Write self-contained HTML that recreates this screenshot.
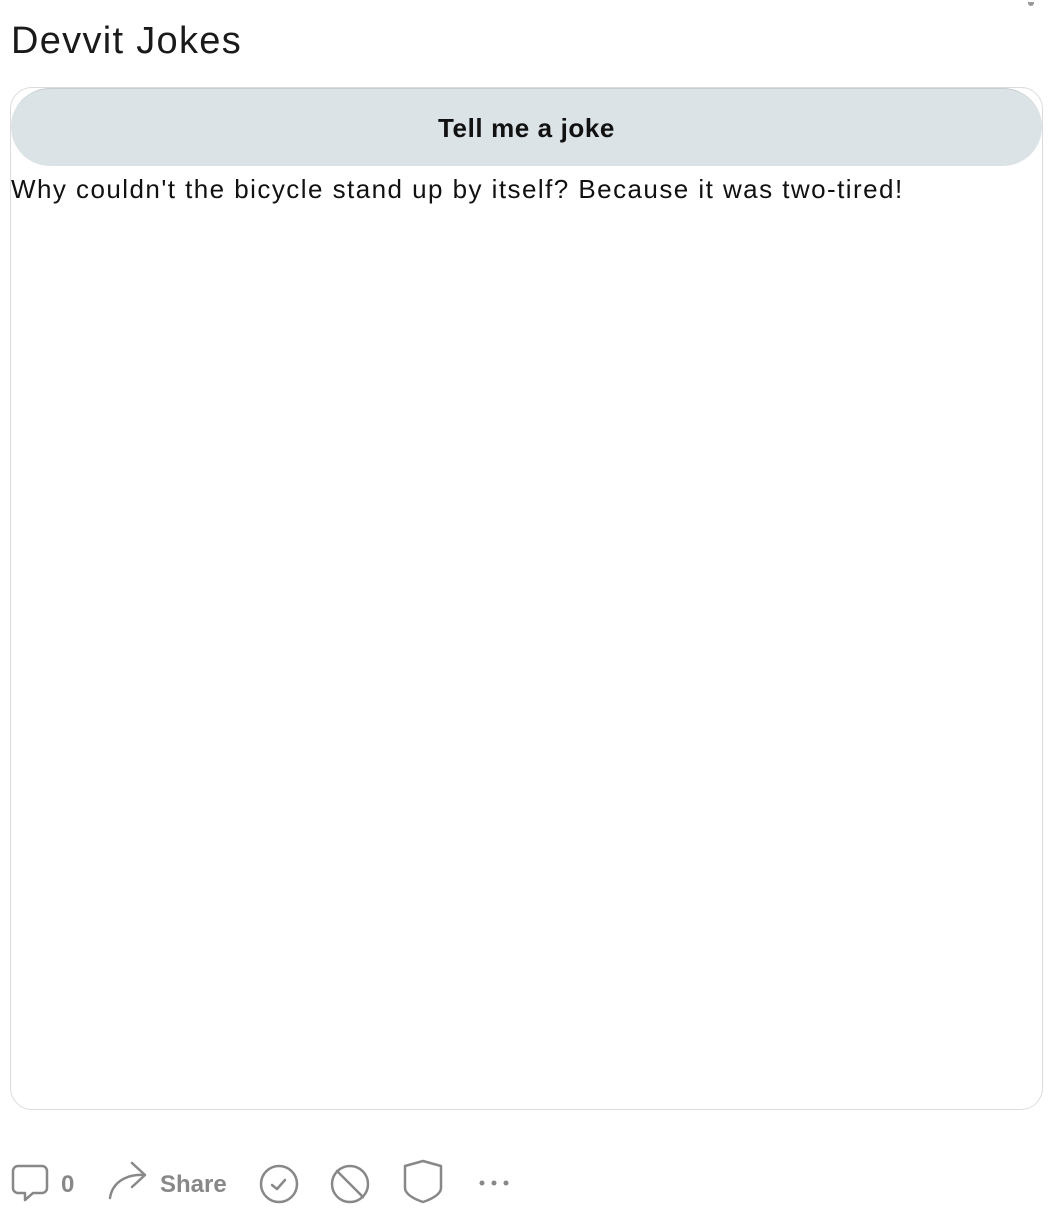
<!DOCTYPE html>
<html><head><style>
body{margin:0;width:1060px;height:1222px;background:#fff;font-family:"Liberation Sans",sans-serif;position:relative;overflow:hidden}
h1{position:absolute;left:11px;top:19px;margin:0;font-size:38px;font-weight:400;color:#1a1a1b;line-height:44px;letter-spacing:1.3px}
.card{position:absolute;left:10px;top:87px;width:1031px;height:1021px;border:1px solid #dcdcdc;border-radius:22px;overflow:hidden}
.btn{position:absolute;left:0;top:0;width:1031px;height:78px;background:#dce3e7;border-radius:40px;border-top:1px solid #c8cdd0;box-sizing:border-box;text-align:center;line-height:78px;font-size:26px;font-weight:700;color:#111;letter-spacing:0.6px}
.joke{position:absolute;left:0;top:86px;font-size:26px;color:#111;white-space:nowrap;letter-spacing:1.45px}
.bar{position:absolute;left:0;top:1160px}
.t{position:absolute;font-size:24px;font-weight:700;color:#888;top:1171px}
</style></head><body>
<div style="position:absolute;left:1028px;top:2px;width:6px;height:4px;background:#999;border-radius:0 0 3px 3px"></div>
<h1>Devvit Jokes</h1>
<div class="card"><div class="btn">Tell me a joke</div><div class="joke">Why couldn't the bicycle stand up by itself? Because it was two-tired!</div></div>
<svg class="bar" width="530" height="60" viewBox="0 1150 530 60" fill="none" stroke="#888" stroke-width="2.5" stroke-linejoin="round" stroke-linecap="round" style="top:1150px">
<path d="M18 1166h24a5 5 0 0 1 5 5v17a5 5 0 0 1-5 5h-9l-8 7v-7h-7a5 5 0 0 1-5-5v-17a5 5 0 0 1 5-5z"/>
<path d="M110 1198c2-14 14-24 34-23M132 1163l13 12-13 12"/>
<circle cx="279" cy="1184" r="18"/><path d="M272 1185l5 4 8-9"/>
<circle cx="350" cy="1184" r="18"/><path d="M337 1171l26 26"/>
<path d="M405 1166l18-5 18 5v22c0 6-9 11-18 14c-9-3-18-8-18-14z"/>
<g fill="#888" stroke="none"><circle cx="482" cy="1183" r="2.5"/><circle cx="494" cy="1183" r="2.5"/><circle cx="506" cy="1183" r="2.5"/></g>
</svg>
<div class="t" style="left:61px">0</div>
<div class="t" style="left:160px">Share</div>
</body></html>
